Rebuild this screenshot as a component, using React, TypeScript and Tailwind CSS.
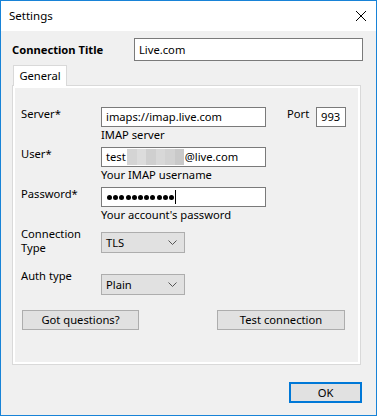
import React from "react";

const Chevron = () => (
  <svg width="9" height="5" viewBox="0 0 9 5" className="block">
    <polyline points="0.5,0.5 4.5,4.5 8.5,0.5" fill="none" stroke="#555" strokeWidth="1" />
  </svg>
);

const Select = ({ value }: { value: string }) => (
  <div className="w-[84px] h-[21px] bg-[#e1e1e1] border border-[#adadad] flex items-center justify-between pl-[4px] pr-[7px]">
    <span className="leading-[16px]">{value}</span>
    <Chevron />
  </div>
);

export default function App() {
  return (
    <div
      className="w-[377px] h-[416px] border border-[#1883d7] bg-[#f0f0f0] flex flex-col text-[11.2px] text-black"
      style={{ fontFamily: '"Noto Sans", "Open Sans", sans-serif' }}
    >
      <div className="h-[30px] bg-white flex items-center justify-between pl-[8px] pr-[10px] shrink-0">
        <span className="leading-[16px] text-[11.5px]">Settings</span>
        <svg width="10" height="10" viewBox="0 0 10 10" className="block">
          <line x1="0" y1="0" x2="10" y2="10" stroke="#000" strokeWidth="1" />
          <line x1="10" y1="0" x2="0" y2="10" stroke="#000" strokeWidth="1" />
        </svg>
      </div>

      <div className="flex flex-col pl-[11px]">
        <div className="flex items-center mt-[7px]">
          <span className="w-[122px] font-bold leading-[16px]">Connection Title</span>
          <div className="w-[229px] h-[23px] bg-white border border-[#7a7a7a] flex items-center px-[4px] leading-[16px]">
            Live.com
          </div>
        </div>

        <div className="mt-[4px] ml-[1px] w-[54px] h-[21px] -mb-[1px] bg-white border border-b-0 border-[#d9d9d9] relative z-10 flex items-center justify-center leading-[16px]">
          General
        </div>

        <div className="w-[349px] h-[280px] border border-[#d9d9d9] bg-white p-[2px]">
          <div className="h-full bg-[#f0f0f0] flex flex-col pl-[6px] pt-[19px]">
            <div className="flex items-start">
              <span className="w-[80px] leading-[16px] -mt-[1px]">Server*</span>
              <div className="flex flex-col">
                <div className="w-[165px] h-[20px] bg-white border border-[#7a7a7a] flex items-center px-[4px] leading-[16px]">
                  imaps://imap.live.com
                </div>
                <span className="leading-[16px]">IMAP server</span>
              </div>
              <span className="ml-[21px] w-[29px] leading-[16px] -mt-[1px]">Port</span>
              <div className="w-[30px] h-[20px] bg-white border border-[#7a7a7a] flex items-center px-[4px] leading-[16px]">
                993
              </div>
            </div>

            <div className="flex items-start mt-[4px]">
              <span className="w-[80px] leading-[16px] -mt-[1px]">User*</span>
              <div className="flex flex-col">
                <div className="w-[165px] h-[20px] bg-white border border-[#7a7a7a] flex items-center pl-[4px] leading-[16px]">
                  <span>test</span>
                  <div className="flex h-[16px] mx-[1px]">
                    <div className="w-[10px] bg-[#d4d4d4]" />
                    <div className="w-[9px] bg-[#dcdcdc]" />
                    <div className="w-[10px] bg-[#cfcfcf]" />
                    <div className="w-[9px] bg-[#d8d8d8]" />
                    <div className="w-[10px] bg-[#d2d2d2]" />
                    <div className="w-[9px] bg-[#c9c9c9]" />
                  </div>
                  <span>@live.com</span>
                </div>
                <span className="leading-[16px]">Your IMAP username</span>
              </div>
            </div>

            <div className="flex items-start mt-[4px]">
              <span className="w-[80px] leading-[16px] -mt-[1px]">Password*</span>
              <div className="flex flex-col">
                <div className="w-[165px] h-[20px] bg-white border border-[#7a7a7a] flex items-center pl-[5px]">
                  <div className="flex gap-[1.2px]">
                    {Array.from({ length: 11 }).map((_, i) => (
                      <span key={i} className="block w-[5px] h-[5px] rounded-full bg-black" />
                    ))}
                  </div>
                  <span className="block w-[1px] h-[14px] bg-black ml-[1px]" />
                </div>
                <span className="leading-[16px]">Your account's password</span>
              </div>
            </div>

            <div className="flex items-start mt-[9px]">
              <span className="w-[80px] leading-[14px] -mt-[5px]">
                Connection
                <br />
                Type
              </span>
              <Select value="TLS" />
            </div>

            <div className="flex items-start mt-[19px]">
              <span className="w-[80px] leading-[16px] -mt-[6px]">Auth type</span>
              <Select value="Plain" />
            </div>

            <div className="flex items-start mt-[15px] ml-[1px]">
              <div className="w-[117px] h-[20px] bg-[#e1e1e1] border border-[#adadad] flex items-center justify-center leading-[16px]">
                Got questions?
              </div>
              <div className="ml-[78px] w-[128px] h-[20px] bg-[#e1e1e1] border border-[#adadad] flex items-center justify-center leading-[16px]">
                Test connection
              </div>
            </div>
          </div>
        </div>

        <div className="flex justify-end pr-[14px] mt-[17px]">
          <div className="w-[73px] h-[21px] bg-[#e1e1e1] border-2 border-[#0078d7] flex items-center justify-center leading-[16px]">
            OK
          </div>
        </div>
      </div>
    </div>
  );
}
